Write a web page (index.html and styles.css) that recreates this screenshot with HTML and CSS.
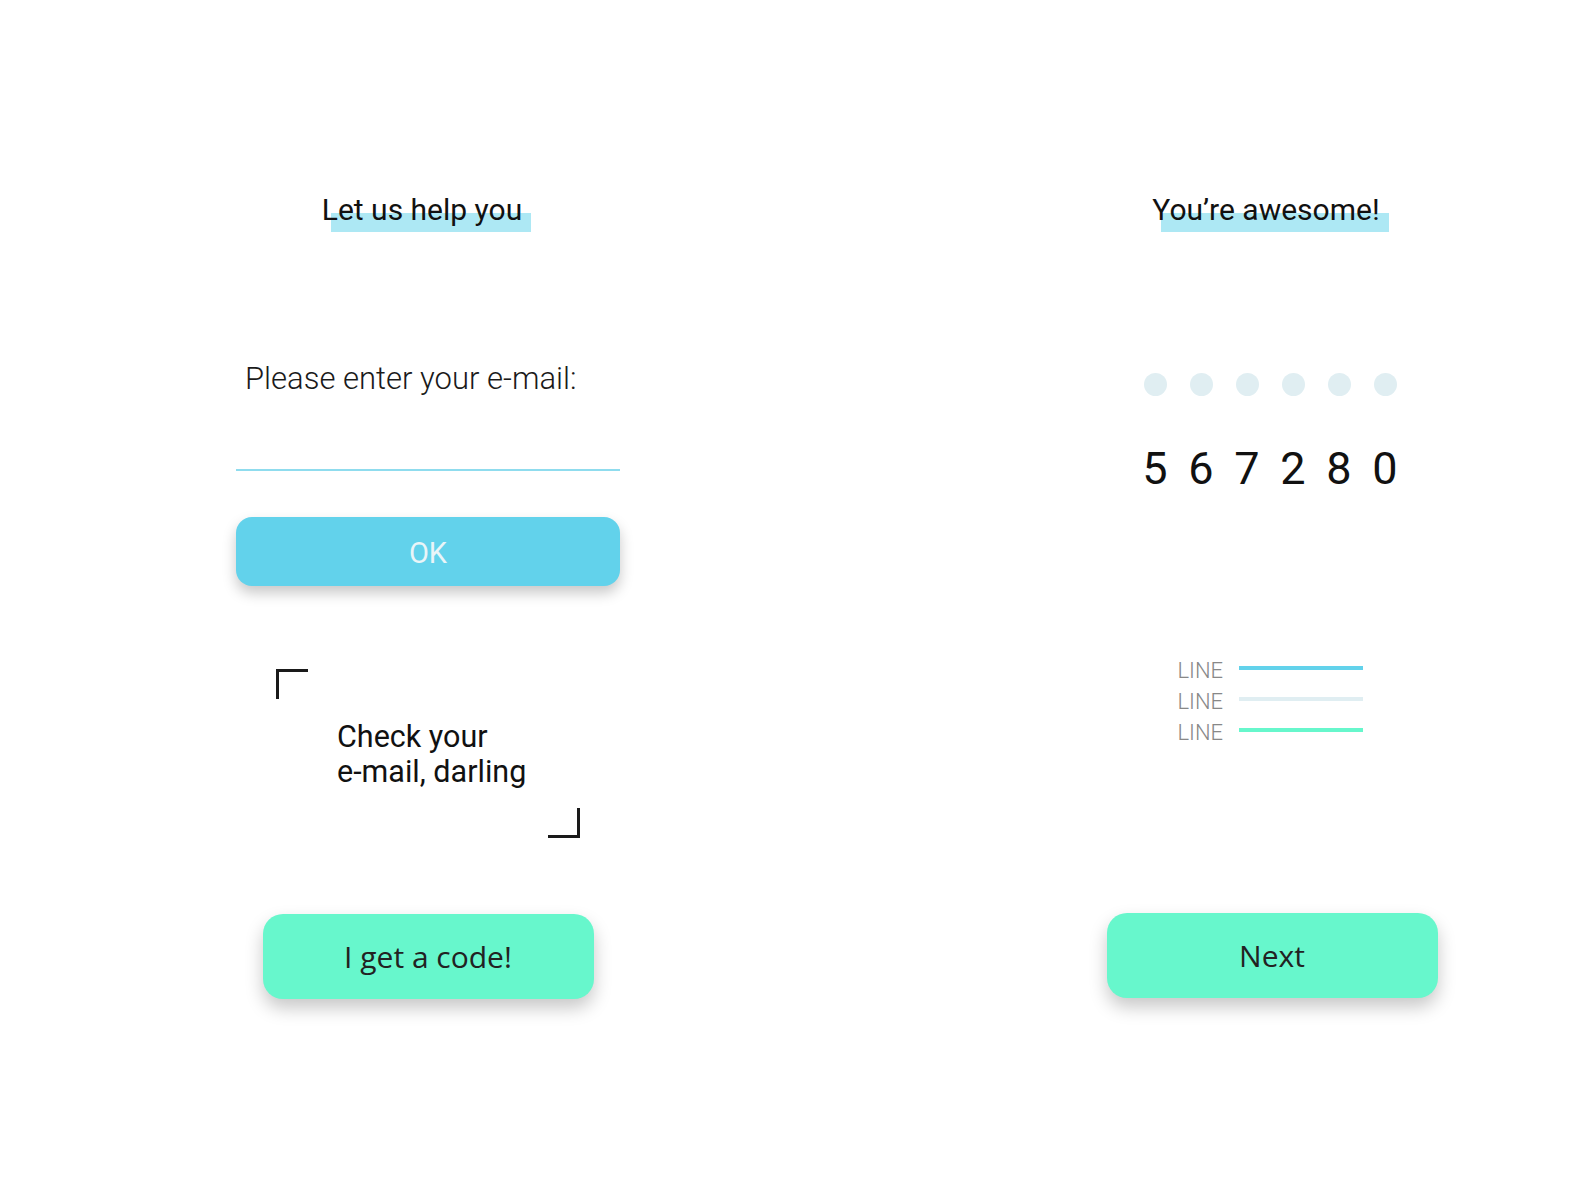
FILE: index.html
```html
<!DOCTYPE html>
<html lang="en">
<head>
    <meta charset="UTF-8">
    <meta name="viewport" content="width=device-width, initial-scale=1.0">
    <title>E-mail Verification</title>
    <link rel="stylesheet" href="styles.css">
</head>
<body>

    <div class="screens">
        <!-- Step 1: ask for the e-mail -->
        <section class="screen">
            <h1 class="screen-title"><span>Let us help you</span></h1>

            <label class="field-label" for="email">Please enter your e-mail:</label>
            <input class="email-field" type="email" id="email" name="email">

            <button class="btn btn-blue" type="button">OK</button>

            <div class="note">
                <p>Check your<br>e-mail, darling</p>
            </div>

            <button class="btn btn-green" type="button">I get a code!</button>
        </section>

        <!-- Step 2: show the code -->
        <section class="screen">
            <h1 class="screen-title"><span>You’re awesome!</span></h1>

            <div class="code-dots">
                <span></span><span></span><span></span><span></span><span></span><span></span>
            </div>
            <div class="code-digits">
                <span>5</span><span>6</span><span>7</span><span>2</span><span>8</span><span>0</span>
            </div>

            <ul class="legend">
                <li><span>LINE</span><i class="bar bar-blue"></i></li>
                <li><span>LINE</span><i class="bar bar-pale"></i></li>
                <li><span>LINE</span><i class="bar bar-green"></i></li>
            </ul>

            <button class="btn btn-green" type="button">Next</button>
        </section>
    </div>

</body>
</html>
```

FILE: styles.css
```css
/* --- Base & palette --- */
:root {
    --blue: #62d2eb;
    --pale-blue: #ade8f4;
    --dot: #e0eef2;
    --green: #67f7cc;
    --dark-text: #111;
    --button-text: #222;
    --shadow: rgba(0, 0, 0, 0.22);
}
* { margin: 0; padding: 0; box-sizing: border-box; }
html, body { min-height: 100%; }
body { font-family: Roboto, 'Noto Sans', sans-serif; background: #fff; color: var(--dark-text); }

/* --- Two screens side by side --- */
.screens { display: flex; gap: 460px; padding: 192px 0 120px 236px; }
.screen { width: 384px; display: flex; flex-direction: column; align-items: center; }

/* --- Title with the marker stroke behind it --- */
.screen-title { font-size: 30px; font-weight: 400; line-height: 36px; margin-right: 12px; }
.screen-title span { position: relative; display: inline-block; }
.screen-title span::before { content: ""; position: absolute; left: 9px; top: 21px; width: 100%; height: 19px; background: var(--pale-blue); z-index: -1; }

/* --- E-mail step --- */
.field-label { align-self: flex-start; margin: 133px 0 0 9px; font-size: 31px; font-weight: 300; line-height: 36px; color: #1a1a1a; }
.email-field { width: 100%; height: 52px; margin-top: 22px; border: none; border-bottom: 2px solid #8fdcee; font: 300 24px Roboto, sans-serif; outline: none; background: transparent; }

.btn { border: none; cursor: pointer; font-family: 'Open Sans', 'Noto Sans', sans-serif; }
.btn-blue { width: 100%; height: 69px; margin-top: 46px; padding-top: 3px; border-radius: 16px; background: var(--blue); color: #e9f5f8; font-family: Roboto, sans-serif; font-size: 29px; box-shadow: 0 7px 14px var(--shadow); }
.btn-green { width: 331px; height: 85px; border-radius: 20px; background: var(--green); color: var(--button-text); font-size: 30px; box-shadow: 0 9px 18px var(--shadow); }

.note { position: relative; width: 304px; height: 169px; margin: 83px 0 76px; padding: 50px 0 0 61px; font-size: 30.5px; line-height: 35px; }
.note::before, .note::after { content: ""; position: absolute; width: 29px; height: 27px; border: 0 solid #1a1a1a; }
.note::before { top: 0; left: 0; border-top-width: 3px; border-left-width: 3px; }
.note::after { right: 0; bottom: 0; border-bottom-width: 3px; border-right-width: 3px; }

/* --- Code step --- */
.code-dots, .code-digits { display: flex; margin-right: 4px; }
.code-dots { margin-top: 145px; }
.code-dots span { width: 46px; display: flex; justify-content: center; }
.code-dots span::before { content: ""; width: 23px; height: 23px; border-radius: 50%; background: var(--dot); }
.code-digits { margin-top: 47px; }
.code-digits span { width: 46px; text-align: center; font-size: 45px; line-height: 52px; }

.legend { list-style: none; margin: 160px 4px 165px 0; }
.legend li { display: flex; align-items: center; gap: 16px; height: 31px; }
.legend span { font-size: 22px; font-weight: 300; color: #888; width: 45px; }
.bar { display: block; width: 124px; height: 4px; margin-bottom: 5px; }
.bar-blue { background: var(--blue); }
.bar-pale { background: var(--dot); }
.bar-green { background: var(--green); }
```
